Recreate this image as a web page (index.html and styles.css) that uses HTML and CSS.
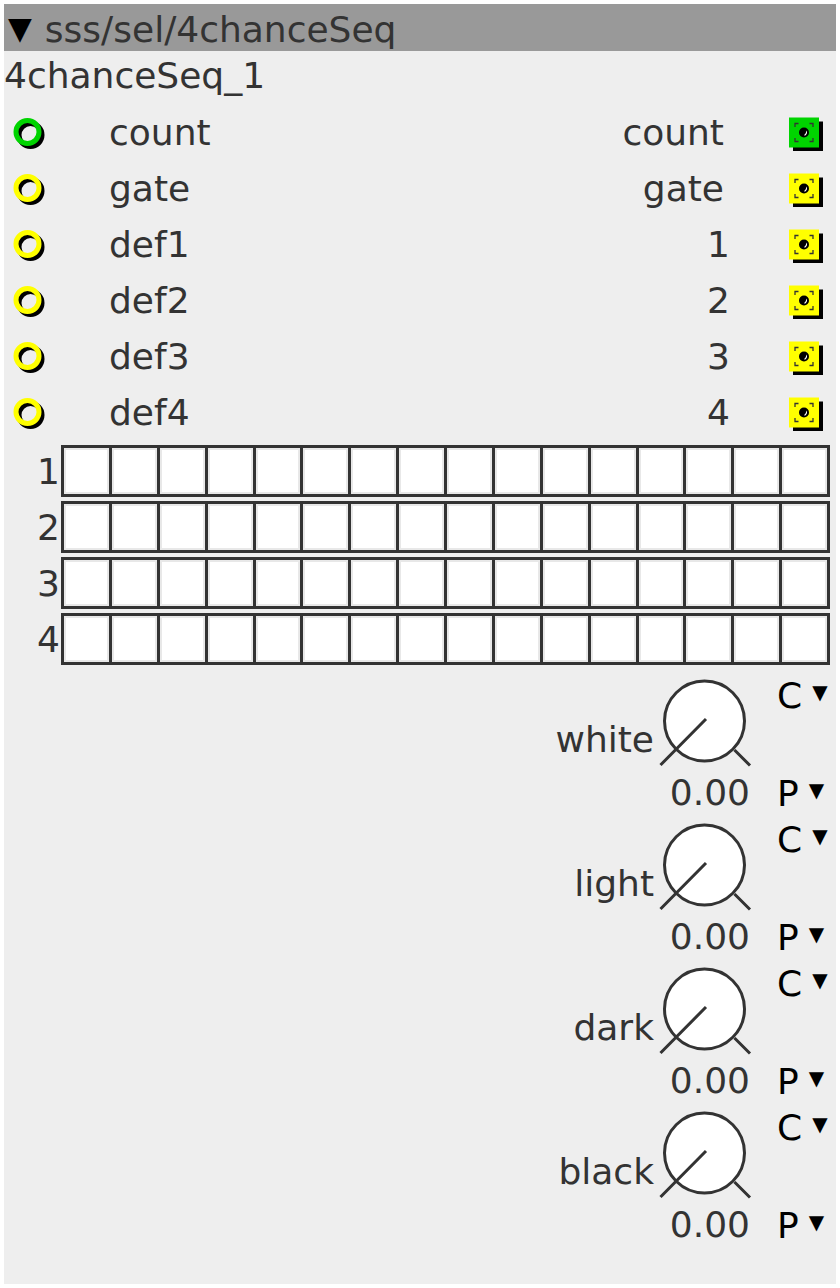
FILE: index.html
```html
<!DOCTYPE html>
<html lang="en">
<head>
    <meta charset="UTF-8">
    <title>4chanceSeq</title>
    <link rel="stylesheet" href="styles.css">
</head>
<body>
    <div class="panel">
        <div class="head"><span class="caret">▼</span>sss/sel/4chanceSeq</div>
        <div class="title">4chanceSeq_1</div>

        <!-- inputs / outputs -->
        <div class="ports">
            <div class="port">
                <svg class="jack" width="36" height="36" viewBox="0 0 36 36"><circle cx="17.5" cy="20" r="11.5" fill="none" stroke="#000" stroke-width="5"/><circle cx="14.5" cy="17" r="11.5" fill="none" stroke="#00d400" stroke-width="5"/></svg>
                <span class="name">count</span>
                <span class="out-name">count</span>
                <svg class="plug" width="36" height="36" viewBox="0 0 36 36"><rect x="6" y="6.5" width="30" height="30" fill="#000"/><rect x="2" y="2.5" width="30" height="30" fill="#00d400"/><path d="M8 12V8.5h3.5M22.5 8.5H26V12M26 23v3.5h-3.5M11.5 26.5H8V23" fill="none" stroke="#333" stroke-width="1.3"/><circle cx="17" cy="17.5" r="5" fill="#000"/><path d="M19.5 15.5c1.2 1.6 0.6 3.8-1.5 5.2l-1-0.6c1.6-1.2 2.3-2.8 2.5-4.6z" fill="#fff"/></svg>
            </div>
            <div class="port">
                <svg class="jack" width="36" height="36" viewBox="0 0 36 36"><circle cx="17.5" cy="20" r="11.5" fill="none" stroke="#000" stroke-width="5"/><circle cx="14.5" cy="17" r="11.5" fill="none" stroke="#ffff00" stroke-width="5"/></svg>
                <span class="name">gate</span>
                <span class="out-name">gate</span>
                <svg class="plug" width="36" height="36" viewBox="0 0 36 36"><rect x="6" y="6.5" width="30" height="30" fill="#000"/><rect x="2" y="2.5" width="30" height="30" fill="#ffff00"/><path d="M8 12V8.5h3.5M22.5 8.5H26V12M26 23v3.5h-3.5M11.5 26.5H8V23" fill="none" stroke="#333" stroke-width="1.3"/><circle cx="17" cy="17.5" r="5" fill="#000"/><path d="M19.5 15.5c1.2 1.6 0.6 3.8-1.5 5.2l-1-0.6c1.6-1.2 2.3-2.8 2.5-4.6z" fill="#fff"/></svg>
            </div>
            <div class="port">
                <svg class="jack" width="36" height="36" viewBox="0 0 36 36"><circle cx="17.5" cy="20" r="11.5" fill="none" stroke="#000" stroke-width="5"/><circle cx="14.5" cy="17" r="11.5" fill="none" stroke="#ffff00" stroke-width="5"/></svg>
                <span class="name">def1</span>
                <span class="out-name num">1</span>
                <svg class="plug" width="36" height="36" viewBox="0 0 36 36"><rect x="6" y="6.5" width="30" height="30" fill="#000"/><rect x="2" y="2.5" width="30" height="30" fill="#ffff00"/><path d="M8 12V8.5h3.5M22.5 8.5H26V12M26 23v3.5h-3.5M11.5 26.5H8V23" fill="none" stroke="#333" stroke-width="1.3"/><circle cx="17" cy="17.5" r="5" fill="#000"/><path d="M19.5 15.5c1.2 1.6 0.6 3.8-1.5 5.2l-1-0.6c1.6-1.2 2.3-2.8 2.5-4.6z" fill="#fff"/></svg>
            </div>
            <div class="port">
                <svg class="jack" width="36" height="36" viewBox="0 0 36 36"><circle cx="17.5" cy="20" r="11.5" fill="none" stroke="#000" stroke-width="5"/><circle cx="14.5" cy="17" r="11.5" fill="none" stroke="#ffff00" stroke-width="5"/></svg>
                <span class="name">def2</span>
                <span class="out-name num">2</span>
                <svg class="plug" width="36" height="36" viewBox="0 0 36 36"><rect x="6" y="6.5" width="30" height="30" fill="#000"/><rect x="2" y="2.5" width="30" height="30" fill="#ffff00"/><path d="M8 12V8.5h3.5M22.5 8.5H26V12M26 23v3.5h-3.5M11.5 26.5H8V23" fill="none" stroke="#333" stroke-width="1.3"/><circle cx="17" cy="17.5" r="5" fill="#000"/><path d="M19.5 15.5c1.2 1.6 0.6 3.8-1.5 5.2l-1-0.6c1.6-1.2 2.3-2.8 2.5-4.6z" fill="#fff"/></svg>
            </div>
            <div class="port">
                <svg class="jack" width="36" height="36" viewBox="0 0 36 36"><circle cx="17.5" cy="20" r="11.5" fill="none" stroke="#000" stroke-width="5"/><circle cx="14.5" cy="17" r="11.5" fill="none" stroke="#ffff00" stroke-width="5"/></svg>
                <span class="name">def3</span>
                <span class="out-name num">3</span>
                <svg class="plug" width="36" height="36" viewBox="0 0 36 36"><rect x="6" y="6.5" width="30" height="30" fill="#000"/><rect x="2" y="2.5" width="30" height="30" fill="#ffff00"/><path d="M8 12V8.5h3.5M22.5 8.5H26V12M26 23v3.5h-3.5M11.5 26.5H8V23" fill="none" stroke="#333" stroke-width="1.3"/><circle cx="17" cy="17.5" r="5" fill="#000"/><path d="M19.5 15.5c1.2 1.6 0.6 3.8-1.5 5.2l-1-0.6c1.6-1.2 2.3-2.8 2.5-4.6z" fill="#fff"/></svg>
            </div>
            <div class="port">
                <svg class="jack" width="36" height="36" viewBox="0 0 36 36"><circle cx="17.5" cy="20" r="11.5" fill="none" stroke="#000" stroke-width="5"/><circle cx="14.5" cy="17" r="11.5" fill="none" stroke="#ffff00" stroke-width="5"/></svg>
                <span class="name">def4</span>
                <span class="out-name num">4</span>
                <svg class="plug" width="36" height="36" viewBox="0 0 36 36"><rect x="6" y="6.5" width="30" height="30" fill="#000"/><rect x="2" y="2.5" width="30" height="30" fill="#ffff00"/><path d="M8 12V8.5h3.5M22.5 8.5H26V12M26 23v3.5h-3.5M11.5 26.5H8V23" fill="none" stroke="#333" stroke-width="1.3"/><circle cx="17" cy="17.5" r="5" fill="#000"/><path d="M19.5 15.5c1.2 1.6 0.6 3.8-1.5 5.2l-1-0.6c1.6-1.2 2.3-2.8 2.5-4.6z" fill="#fff"/></svg>
            </div>
        </div>

        <!-- step grid -->
        <div class="seq">
            <div class="seq-row"><span class="seq-num">1</span><div class="steps"><i></i><i></i><i></i><i></i><i></i><i></i><i></i><i></i><i></i><i></i><i></i><i></i><i></i><i></i><i></i><i></i></div></div>
            <div class="seq-row"><span class="seq-num">2</span><div class="steps"><i></i><i></i><i></i><i></i><i></i><i></i><i></i><i></i><i></i><i></i><i></i><i></i><i></i><i></i><i></i><i></i></div></div>
            <div class="seq-row"><span class="seq-num">3</span><div class="steps"><i></i><i></i><i></i><i></i><i></i><i></i><i></i><i></i><i></i><i></i><i></i><i></i><i></i><i></i><i></i><i></i></div></div>
            <div class="seq-row"><span class="seq-num">4</span><div class="steps"><i></i><i></i><i></i><i></i><i></i><i></i><i></i><i></i><i></i><i></i><i></i><i></i><i></i><i></i><i></i><i></i></div></div>
        </div>

        <!-- knobs -->
        <div class="knobs">
            <div class="knob">
                <span class="knob-label">white</span>
                <div class="dial">
                    <svg width="96" height="92" viewBox="0 0 96 92"><circle cx="48.5" cy="45" r="40" fill="#fff" stroke="#333" stroke-width="3"/><path d="M50 43L4.5 89M78.5 74L94 89.5" stroke="#333" stroke-width="3"/></svg>
                    <div class="dial-val">0.00</div>
                </div>
                <div class="modes">
                    <div class="mode">C<span class="arrow">▼</span></div>
                    <div class="mode mode-p">P<span class="arrow">▼</span></div>
                </div>
            </div>
            <div class="knob">
                <span class="knob-label">light</span>
                <div class="dial">
                    <svg width="96" height="92" viewBox="0 0 96 92"><circle cx="48.5" cy="45" r="40" fill="#fff" stroke="#333" stroke-width="3"/><path d="M50 43L4.5 89M78.5 74L94 89.5" stroke="#333" stroke-width="3"/></svg>
                    <div class="dial-val">0.00</div>
                </div>
                <div class="modes">
                    <div class="mode">C<span class="arrow">▼</span></div>
                    <div class="mode mode-p">P<span class="arrow">▼</span></div>
                </div>
            </div>
            <div class="knob">
                <span class="knob-label">dark</span>
                <div class="dial">
                    <svg width="96" height="92" viewBox="0 0 96 92"><circle cx="48.5" cy="45" r="40" fill="#fff" stroke="#333" stroke-width="3"/><path d="M50 43L4.5 89M78.5 74L94 89.5" stroke="#333" stroke-width="3"/></svg>
                    <div class="dial-val">0.00</div>
                </div>
                <div class="modes">
                    <div class="mode">C<span class="arrow">▼</span></div>
                    <div class="mode mode-p">P<span class="arrow">▼</span></div>
                </div>
            </div>
            <div class="knob">
                <span class="knob-label">black</span>
                <div class="dial">
                    <svg width="96" height="92" viewBox="0 0 96 92"><circle cx="48.5" cy="45" r="40" fill="#fff" stroke="#333" stroke-width="3"/><path d="M50 43L4.5 89M78.5 74L94 89.5" stroke="#333" stroke-width="3"/></svg>
                    <div class="dial-val">0.00</div>
                </div>
                <div class="modes">
                    <div class="mode">C<span class="arrow">▼</span></div>
                    <div class="mode mode-p">P<span class="arrow">▼</span></div>
                </div>
            </div>
        </div>
    </div>
</body>
</html>
```

FILE: styles.css
```css
/* module panel */
body {
    margin: 0;
    background: #fff;
    font-family: "DejaVu Sans", sans-serif;
    font-size: 36px;
    color: #333;
}
.panel {
    margin: 4px;
    width: 832px;
    height: 1280px;
    background: #eee;
}
.head {
    height: 47px;
    line-height: 47px;
    padding: 0 4px;
    padding-top: 2px;
    box-sizing: border-box;
    background: #999;
    white-space: nowrap;
}
.caret {
    color: #000;
    font-size: 31px;
    line-height: 31px;
    margin-right: 13px;
    vertical-align: 3px;
}
.title {
    line-height: 50px;
    margin-bottom: 3.5px;
}
.port {
    display: flex;
    align-items: center;
    height: 56px;
    padding: 0 13px 0 9px;
}
.jack {
    flex: none;
}
.name {
    margin-left: 60px;
}
.out-name {
    flex: 1;
    text-align: right;
    margin-right: 63px;
}
.out-name.num {
    margin-right: 57px;
}
.plug {
    flex: none;
}
.seq {
    margin-top: 4.5px;
    display: flex;
    flex-direction: column;
    gap: 4px;
}
.seq-row {
    display: flex;
    align-items: center;
    padding-right: 6px;
}
.seq-num {
    width: 56px;
    margin-right: 1px;
    text-align: right;
}
.steps {
    flex: 1;
    display: flex;
    gap: 3px;
    height: 52px;
    box-sizing: border-box;
    border: 3px solid #333;
    background: #333;
}
.steps i {
    flex: 1;
    background: #fff;
    box-shadow: inset 0 0 0 2px #e8e8e8;
}
.knobs {
    margin-top: 7px;
}
.knob {
    display: flex;
    justify-content: flex-end;
    height: 144px;
}
.knob-label {
    margin-top: 46.5px;
    margin-right: 2px;
    line-height: 42px;
}
.dial {
    width: 96px;
}
.dial svg {
    display: block;
    margin-top: 4px;
}
.dial-val {
    margin-top: 3.5px;
    line-height: 42px;
    text-align: right;
    padding-right: 2px;
}
.modes {
    width: 59px;
    margin-left: 25px;
    color: #000;
}
.mode {
    margin-top: 2.5px;
    line-height: 42px;
    white-space: nowrap;
}
.mode-p {
    margin-top: 56px;
}
.arrow {
    font-size: 20px;
    line-height: 20px;
    margin-left: 10px;
    vertical-align: 9px;
}
```
